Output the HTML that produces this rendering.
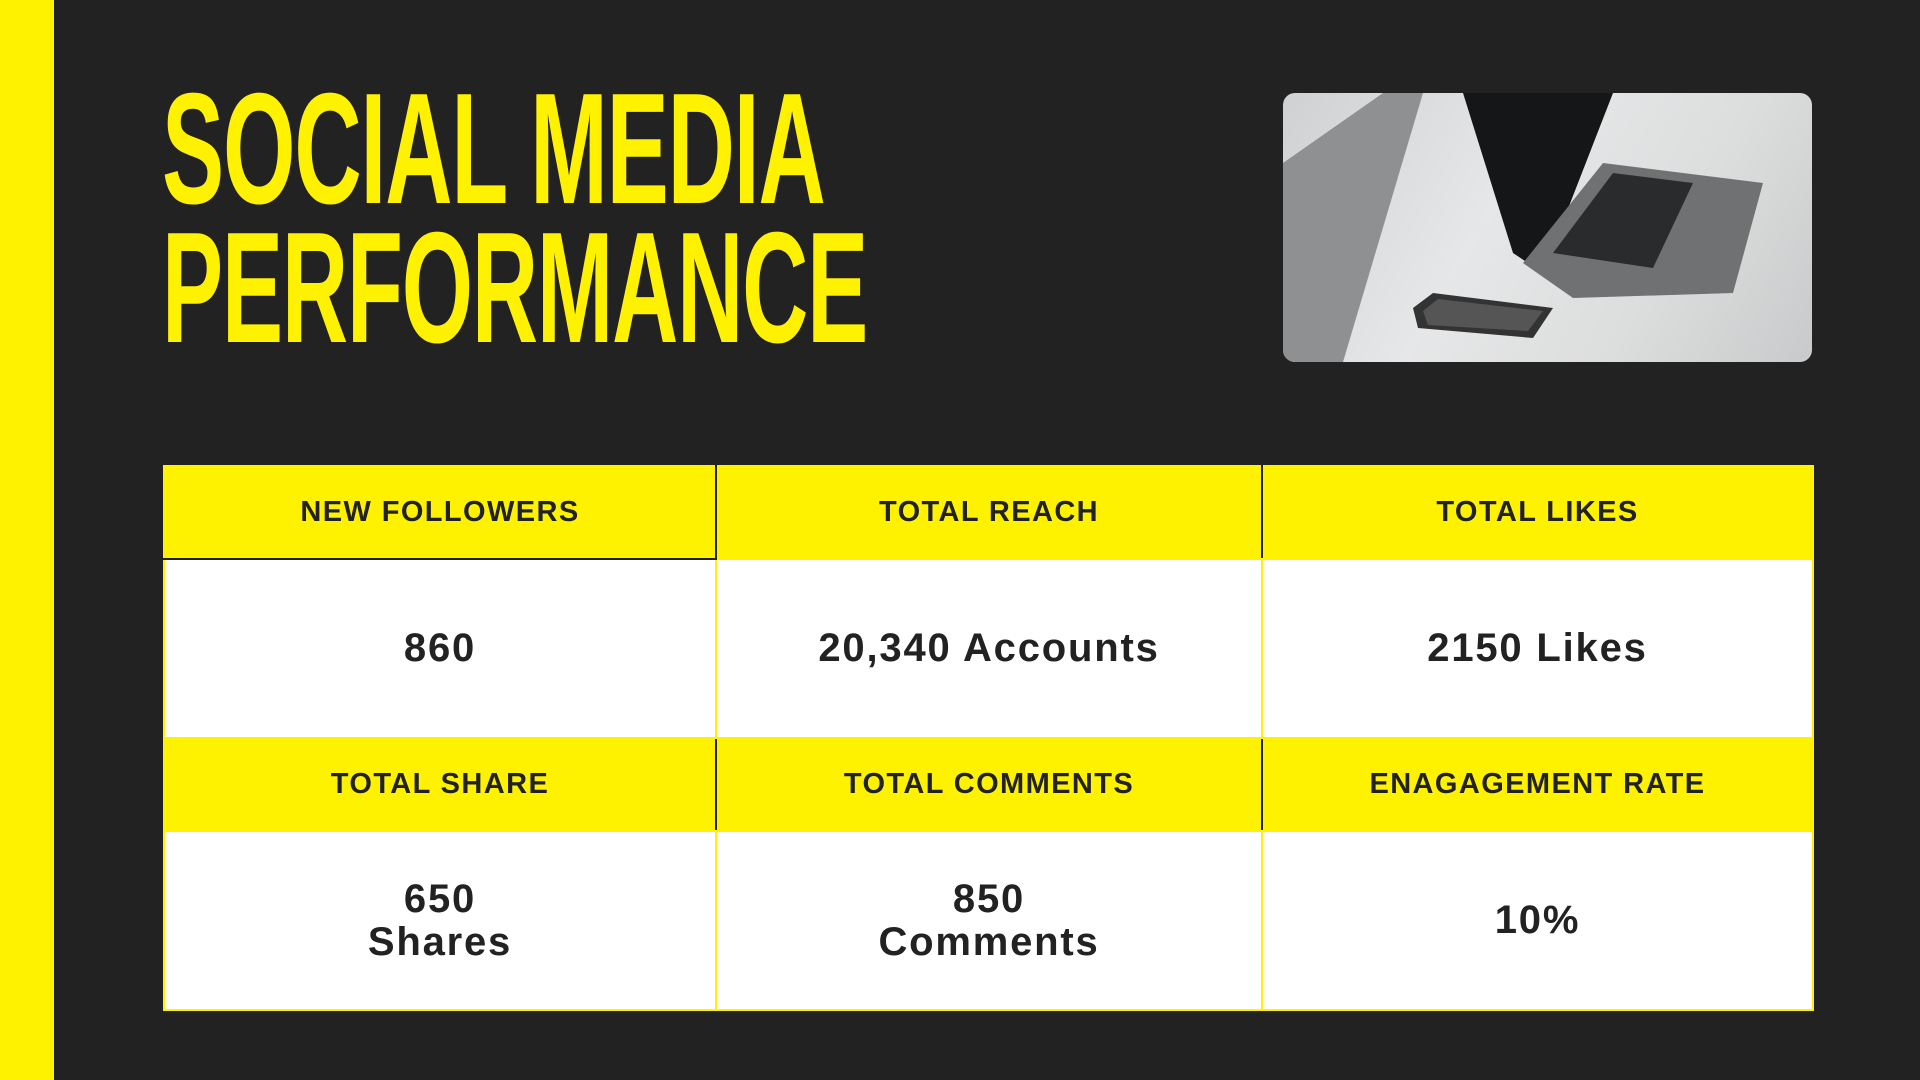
<!DOCTYPE html>
<html><head><meta charset="utf-8"><style>
*{margin:0;padding:0;box-sizing:border-box}
body{width:1920px;height:1080px;background:#222;position:relative;overflow:hidden;font-family:"Liberation Sans",sans-serif}
.bar{position:absolute;left:0;top:0;width:54px;height:1080px;background:#fff200}
.t{position:absolute;left:162px;color:#fff200;font-weight:bold;font-size:158px;line-height:138px;transform-origin:left top;white-space:nowrap;letter-spacing:-2px}
.t1{top:80px;transform:scaleX(0.59)}
.t2{top:219px;transform:scaleX(0.58)}
.img{position:absolute;left:1283px;top:93px;width:529px;height:269px;border-radius:12px;overflow:hidden;background:linear-gradient(120deg,#cfd1d2 0%,#e6e7e8 40%,#dcdddd 70%,#c9cacb 100%)}
table{position:absolute;left:163px;top:465px;width:1649px;border-collapse:collapse;table-layout:fixed}
td{text-align:center;color:#222;font-weight:bold;border:2px solid #fff200}
tr.h td{background:#fff200;height:93px;font-size:29px;letter-spacing:1.4px;border-right:2px solid #222}
tr.h td:last-child{border-right:2px solid #fff200}
tr.d td{background:#fff;height:179px;font-size:40px;line-height:43px;letter-spacing:1.8px}
tr.h1 td:first-child{border-bottom:2px solid #222}
</style></head><body>
<div class="bar"></div>
<div class="t t1">SOCIAL MEDIA</div>
<div class="t t2">PERFORMANCE</div>
<div class="img">
<svg width="529" height="269" viewBox="0 0 529 269">
<polygon points="0,70 100,0 140,0 60,269 0,269" fill="#8e9091"/>
<polygon points="180,0 330,0 260,180 230,160" fill="#151617"/>
<polygon points="240,170 320,70 480,90 450,200 290,205" fill="#6f7173"/>
<polygon points="270,160 330,80 410,90 370,175" fill="#2a2b2d"/>
<polygon points="130,215 150,200 270,215 250,245 135,235" fill="#333"/>
<polygon points="140,218 155,206 260,218 245,238 145,232" fill="#555"/>
</svg></div>
<table>
<colgroup><col style="width:552px"><col style="width:546px"><col style="width:551px"></colgroup>
<tr class="h h1"><td>NEW FOLLOWERS</td><td>TOTAL REACH</td><td>TOTAL LIKES</td></tr>
<tr class="d"><td>860</td><td>20,340 Accounts</td><td>2150 Likes</td></tr>
<tr class="h"><td>TOTAL SHARE</td><td>TOTAL COMMENTS</td><td>ENAGAGEMENT RATE</td></tr>
<tr class="d"><td>650<br>Shares</td><td>850<br>Comments</td><td>10%</td></tr>
</table>
</body></html>
